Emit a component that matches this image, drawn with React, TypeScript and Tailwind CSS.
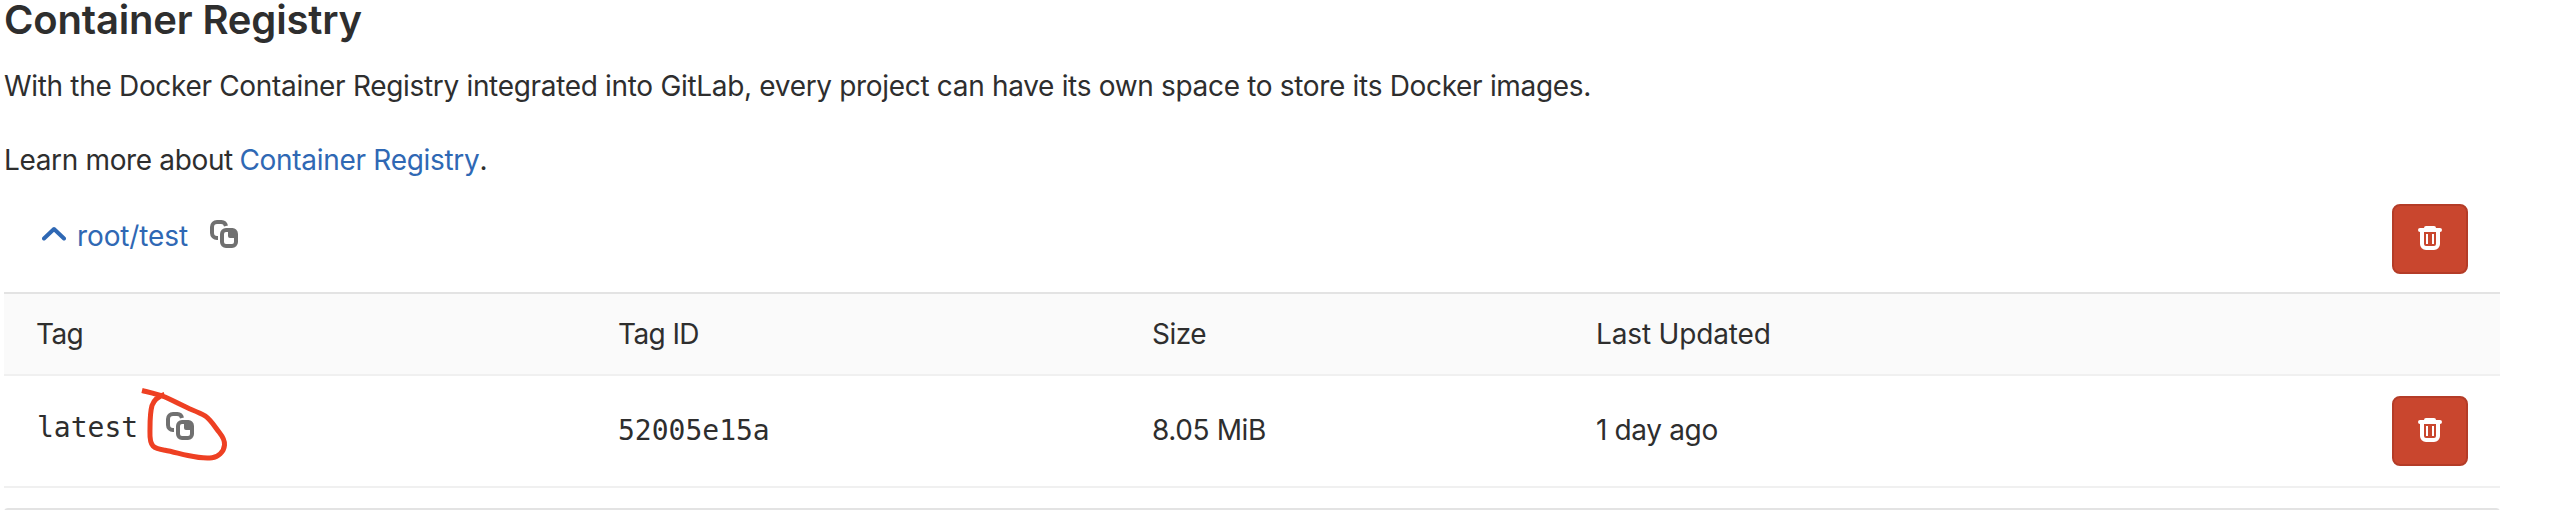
function CopyIcon() {
  return (
    <svg width="28" height="28" viewBox="0 0 28 28" className="block shrink-0 text-[#707070]" aria-hidden="true">
      <path
        d="M8 18H7a5 5 0 0 1-5-5V7a5 5 0 0 1 5-5h4a5 5 0 0 1 5 4"
        fill="none"
        stroke="currentColor"
        strokeWidth="4"
      />
      <path
        fill="currentColor"
        fillRule="evenodd"
        d="M16 8h6.500a5 5 0 0 1 3.600 1.600A6 6 0 0 1 28 14v8a6 6 0 0 1-6 6h-6a6 6 0 0 1-6-6v-8a6 6 0 0 1 6-6zm2 4h-2a2 2 0 0 0-2 2v8a2 2 0 0 0 2 2h6a2 2 0 0 0 2-2v-4h-4a2 2 0 0 1-2-2z"
      />
    </svg>
  );
}

function ChevronUp() {
  return (
    <svg width="24" height="16" viewBox="0 0 24 16" className="mb-1 block shrink-0" aria-hidden="true">
      <path
        d="M2 12.500 12 3l10 9.500"
        fill="none"
        stroke="currentColor"
        strokeWidth="4"
        strokeLinecap="round"
        strokeLinejoin="round"
      />
    </svg>
  );
}

function RemoveButton({ label }: { label: string }) {
  return (
    <button
      type="button"
      aria-label={label}
      className="flex h-[70px] w-[76px] shrink-0 items-center justify-center rounded-lg border-2 border-[#b43c27] bg-[#c9462e] pb-0.5 text-white"
    >
      <svg width="24" height="24" viewBox="0 0 24 24" className="block" fill="currentColor" aria-hidden="true">
        <path
          d="M8 0h8a2 2 0 0 1 2 2h4a2 2 0 0 1 0 4v12a6 6 0 0 1-6 6H8a6 6 0 0 1-6-6V6a2 2 0 0 1 0-4h4a2 2 0 0 1 2-2zM6 6v12a2 2 0 0 0 2 2h8a2 2 0 0 0 2-2V6z"
          fillRule="evenodd"
        />
        <rect x="8" y="8" width="2" height="10" />
        <rect x="14" y="8" width="2" height="10" />
      </svg>
    </button>
  );
}

function HandDrawnCircle() {
  return (
    <svg
      width="92"
      height="78"
      viewBox="138 384 92 78"
      className="pointer-events-none absolute -top-7 -left-7"
      aria-hidden="true"
    >
      <path
        d="M142 390.500C150 392.500 159 394.500 165 397C175 401.500 183 406 190 409C196 411.500 201 413.500 205 415.800C211 420 215 427 219 432C223 437 225 441 224.500 445C224 452 218 457 212 457.700C205 458.500 195 457 188 455.500C179 453.500 172 451.500 165 450.200C160 449.500 156 449 153 446C149 442 150 434 150 428C150 420 150.500 411 152 405.500C154 400 158 396.500 164.500 394.500"
        fill="none"
        stroke="#ee4023"
        strokeWidth="5"
        strokeLinejoin="round"
      />
    </svg>
  );
}

const columns = "grid grid-cols-[582px_534px_443px_1fr_108px] pl-8";

export default function App() {
  return (
    <main className="h-[510px] overflow-hidden bg-white pr-[54px] pl-1 font-['Inter',sans-serif] text-[28px] leading-10 text-[#2e2e2e]">
      <h1 className="mb-[26px] text-[40px] leading-10 font-semibold tracking-[-0.17px]">Container Registry</h1>
      <p className="mb-[34px] tracking-[-0.32px]">
        With the Docker Container Registry integrated into GitLab, every project can have its own space to store its
        Docker images.
      </p>
      <p className="tracking-[-0.35px]">
        Learn more about{" "}
        <a href="#" className="-ml-px tracking-[-0.3px] text-[#2f68b4]">
          Container Registry
        </a>
        .
      </p>

      <section>
        <div className="flex h-28 items-start justify-between pr-8 pl-[38px]">
          <div className="flex items-center pt-9">
            <a href="#" className="flex items-center gap-[11px] text-[#2f68b4]">
              <ChevronUp />
              <span className="tracking-[-0.12px]">root/test</span>
            </a>
            <span className="ml-[22px] pb-1">
              <CopyIcon />
            </span>
          </div>
          <div className="pt-6">
            <RemoveButton label="Remove repository" />
          </div>
        </div>

        <div className={`${columns} border-y-2 border-t-[#e3e3e3] border-b-[#f0f0f0] bg-[#fafafa] py-5`}>
          <span className="tracking-[-0.6px]">Tag</span>
          <span className="tracking-[-0.6px]">Tag ID</span>
          <span className="tracking-[-0.5px]">Size</span>
          <span className="pl-px tracking-[-0.15px]">Last Updated</span>
        </div>

        <div className={`${columns} h-28 items-center border-b-2 border-[#f0f0f0]`}>
          <div className="flex items-center pb-1.5 pl-px">
            <span className="font-['DejaVu_Sans_Mono',monospace]">latest</span>
            <span className="relative ml-7 pb-1">
              <CopyIcon />
              <HandDrawnCircle />
            </span>
          </div>
          <span className="font-['DejaVu_Sans_Mono',monospace]">52005e15a</span>
          <span className="pb-0.5 tracking-[-0.38px]">8.05 MiB</span>
          <span className="pb-0.5 pl-px tracking-[-0.35px]">1 day ago</span>
          <RemoveButton label="Remove tag" />
        </div>

        <div className="mt-5 h-2 rounded-lg border-t-2 border-[#e3e3e3]" />
      </section>
    </main>
  );
}
